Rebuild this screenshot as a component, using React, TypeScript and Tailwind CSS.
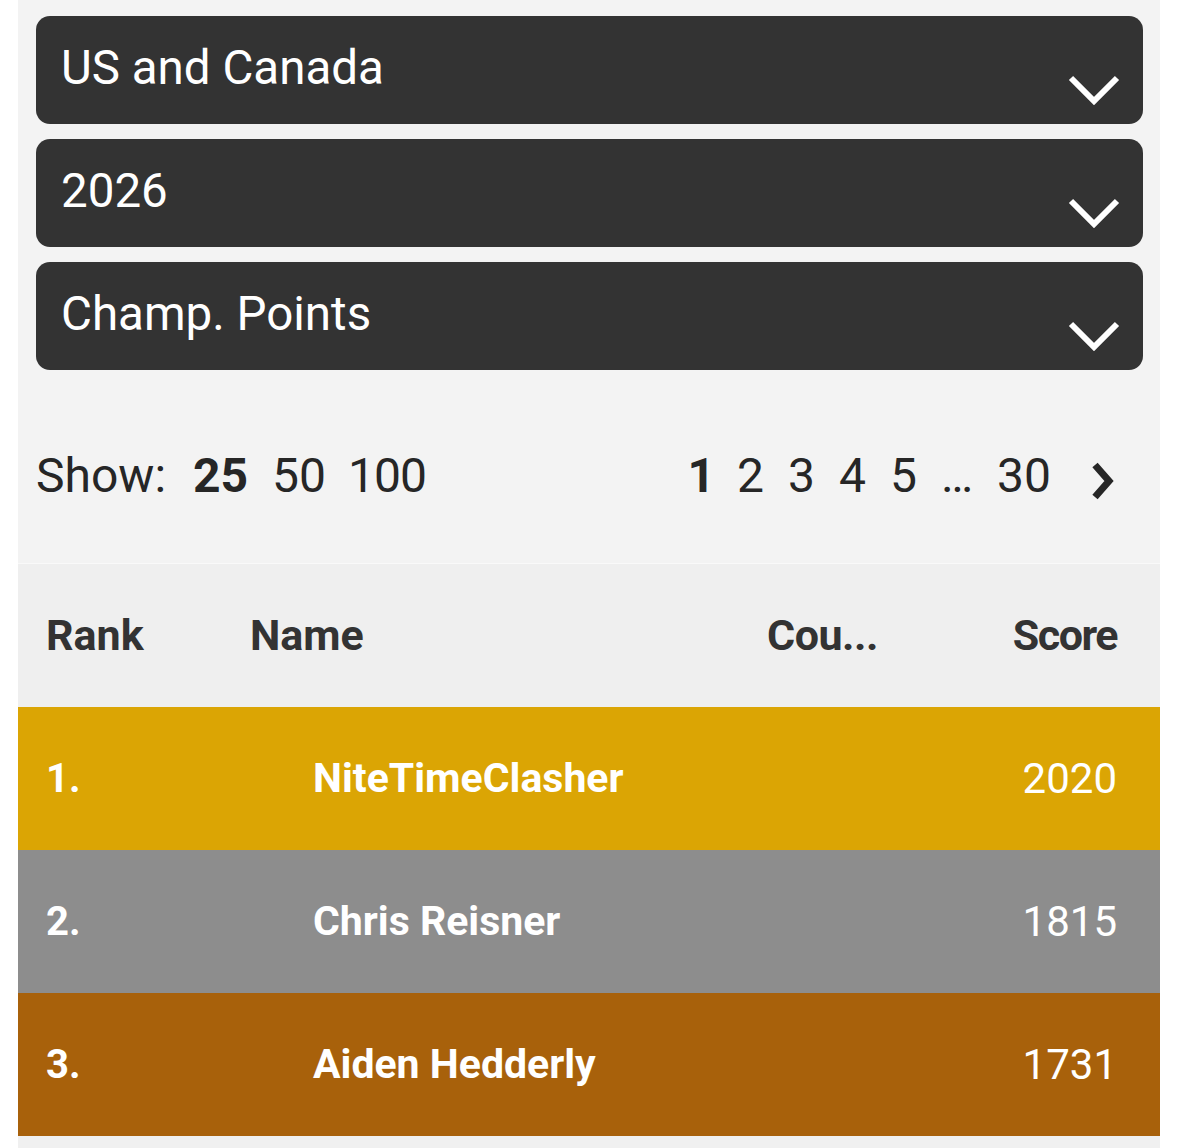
import React from 'react';

const selects = ['US and Canada', '2026', 'Champ. Points'];

const rows = [
  { rank: '1.', name: 'NiteTimeClasher', score: '2020', bg: 'bg-[#dba504]' },
  { rank: '2.', name: 'Chris Reisner', score: '1815', bg: 'bg-[#8d8d8d]' },
  { rank: '3.', name: 'Aiden Hedderly', score: '1731', bg: 'bg-[#a8610b]' },
];

function Chevron() {
  return (
    <svg width="52" height="30" viewBox="0 0 52 30" className="self-end mb-[19px] shrink-0">
      <polyline points="3,3 26,26 49,3" fill="none" stroke="white" strokeWidth="6" />
    </svg>
  );
}

export default function App() {
  return (
    <div className="min-h-screen bg-white font-['Roboto',sans-serif]">
      <div className="ml-[18px] w-[1142px] bg-[#f3f3f3]">
        <div className="pl-[18px] pr-[17px] pt-[16px] flex flex-col gap-[15px]">
          {selects.map((s) => (
            <div key={s} className="h-[108px] rounded-[14px] bg-[#333333] flex justify-between pl-[25px] pr-[23px]">
              <span className="text-[47.5px] leading-none pt-[29px] text-white">{s}</span>
              <Chevron />
            </div>
          ))}
        </div>

        <div className="h-[193px] pt-[19px] px-[18px] flex items-center justify-between text-[#262626] text-[48px] leading-none">
          <div className="flex items-center">
            <span>Show:</span>
            <span className="ml-[27px] font-bold">25</span>
            <span className="ml-[24px]">50</span>
            <span className="ml-[22px] tracking-[-1px]">100</span>
          </div>
          <div className="flex items-center pr-[25px]">
            <span className="font-bold ml-[4px]">1</span>
            <span className="ml-[22px]">2</span>
            <span className="ml-[24px]">3</span>
            <span className="ml-[24px]">4</span>
            <span className="ml-[24px]">5</span>
            <span className="ml-[24px]">…</span>
            <span className="ml-[24px]">30</span>
            <svg width="28" height="40" viewBox="0 0 28 40" className="ml-[38px] mt-[10px]">
              <polyline points="6,4 20,20 6,36" fill="none" stroke="#262626" strokeWidth="7" />
            </svg>
          </div>
        </div>

        <div className="h-[144px] bg-[#efefef] border-t border-[#f9f9f9] flex items-center text-[43px] font-bold text-[#333333] leading-none">
          <span className="w-[232px] pl-[28px]">Rank</span>
          <span className="w-[517px]">Name</span>
          <span className="flex-1 tracking-[-0.5px]">Cou...</span>
          <span className="pr-[43px] tracking-[-1.5px]">Score</span>
        </div>

        {rows.map((r) => (
          <div key={r.rank} className={`h-[143px] ${r.bg} flex items-center text-white leading-none`}>
            <span className="w-[295px] pl-[28px] font-bold text-[40px]">{r.rank}</span>
            <span className="flex-1 font-bold text-[41px]">{r.name}</span>
            <span className="pr-[43px] text-[42px]">{r.score}</span>
          </div>
        ))}
        <div className="h-[12px] bg-[#f0f0f0]" />
      </div>
    </div>
  );
}
